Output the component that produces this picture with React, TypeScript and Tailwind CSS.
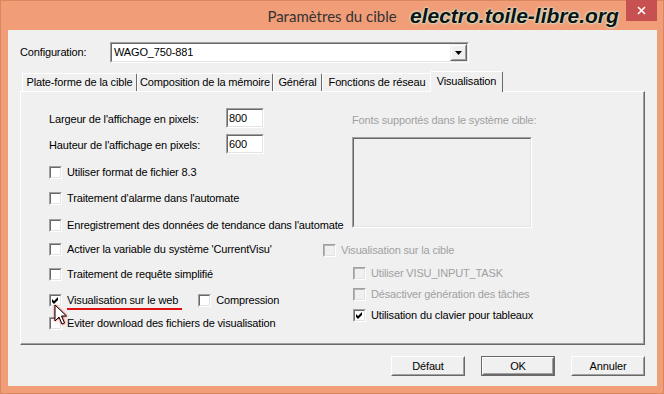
import React from "react";

function CheckMark() {
  return (
    <svg width="9" height="9" viewBox="0 0 9 9" className="block">
      <polygon points="1,3 3,5 7,1 7,4 3,8 1,6" fill="#000" />
    </svg>
  );
}

function Checkbox({ checked = false, disabled = false }: { checked?: boolean; disabled?: boolean }) {
  return (
    <div className="w-[13px] h-[13px] shrink-0 border border-t-[#a0a0a0] border-l-[#a0a0a0] border-b-white border-r-white">
      <div
        className={
          disabled
            ? "w-full h-full border border-t-[#b4b4b4] border-l-[#b4b4b4] border-b-[#e3e3e3] border-r-[#e3e3e3] bg-[#f0f0f0]"
            : "w-full h-full border border-t-[#696969] border-l-[#696969] border-b-[#e3e3e3] border-r-[#e3e3e3] bg-white"
        }
      >
        {checked ? <CheckMark /> : null}
      </div>
    </div>
  );
}

function CheckRow({
  label,
  checked = false,
  disabled = false,
  className = "",
  children,
}: {
  label: string;
  checked?: boolean;
  disabled?: boolean;
  className?: string;
  children?: React.ReactNode;
}) {
  return (
    <div className={`flex items-center h-[16px] whitespace-nowrap ${className}`}>
      <Checkbox checked={checked} disabled={disabled} />
      <span className={disabled ? "ml-[5px] text-[#a0a0a0]" : "ml-[5px] text-black"}>{label}</span>
      {children}
    </div>
  );
}

function Sunken({ className = "", innerClass = "", children }: { className?: string; innerClass?: string; children?: React.ReactNode }) {
  return (
    <div className={`border border-t-[#a0a0a0] border-l-[#a0a0a0] border-b-white border-r-white ${className}`}>
      <div className={`w-full h-full border border-t-[#696969] border-l-[#696969] border-b-[#e3e3e3] border-r-[#e3e3e3] ${innerClass}`}>
        {children}
      </div>
    </div>
  );
}

function Button({ label, isDefault = false }: { label: string; isDefault?: boolean }) {
  return (
    <div className={isDefault ? "w-[74px] h-[20px] border border-[#696969]" : "w-[74px] h-[20px]"}>
      <div className="w-full h-full border border-t-white border-l-white border-b-[#696969] border-r-[#696969]">
        <div className="w-full h-full border border-t-[#f0f0f0] border-l-[#f0f0f0] border-b-[#a0a0a0] border-r-[#a0a0a0] bg-[#f0f0f0] flex items-center justify-center">
          {label}
        </div>
      </div>
    </div>
  );
}

function Tab({ label, w }: { label: string; w: string }) {
  return (
    <div className={`${w} h-[18px] border-t border-l border-r border-t-white border-l-white border-r-[#696969] rounded-t-[2px] flex items-center justify-center whitespace-nowrap`}>
      {label}
    </div>
  );
}

export default function App() {
  return (
    <div className="w-[664px] h-[394px] bg-[#f09d78] shadow-[inset_0_0_0_1px_#d9875f] flex flex-col relative overflow-hidden font-['Liberation_Sans',Arial,sans-serif] text-[11px] tracking-[-0.15px] leading-[13px] text-black">
      {/* Title bar */}
      <div className="h-[30px] shrink-0 flex items-center justify-center pt-[2px]">
        <span className="font-['Lato',sans-serif] text-[15px] tracking-normal text-[#333333]">Paramètres du cible</span>
      </div>
      <div className="absolute left-[410px] top-[5px] font-['Liberation_Sans',Arial,sans-serif] font-bold italic text-[21px] leading-[21px] tracking-normal text-[#111] [text-shadow:0_0_3px_#c8ffe6,0_0_2px_#c8ffe6]">
        electro.toile-libre.org
      </div>
      <div className="absolute left-[626px] top-0 w-[31px] h-[21px] bg-[#c75050] flex items-center justify-center">
        <svg width="9" height="9" viewBox="0 0 9 9">
          <path d="M1 1 L8 8 M8 1 L1 8" stroke="#fff" strokeWidth="1.6" />
        </svg>
      </div>

      {/* Client area */}
      <div className="ml-[8px] mr-[7px] h-[356px] bg-[#f0f0f0] px-[12px] pt-[12px] flex flex-col">
        {/* Configuration row */}
        <div className="flex items-center h-[21px]">
          <span className="w-[90px]">Configuration:</span>
          <Sunken className="w-[359px] h-[21px]" innerClass="bg-white flex items-center">
            <span className="pl-[2px] flex-1">WAGO_750-881</span>
            <div className="w-[17px] h-[17px] border border-t-[#f0f0f0] border-l-[#f0f0f0] border-b-[#696969] border-r-[#696969]">
              <div className="w-full h-full border border-t-white border-l-white border-b-[#a0a0a0] border-r-[#a0a0a0] bg-[#f0f0f0] flex items-center justify-center">
                <svg width="7" height="4" viewBox="0 0 7 4">
                  <polygon points="0,0 7,0 3.5,4" fill="#000" />
                </svg>
              </div>
            </div>
          </Sunken>
        </div>

        {/* Tabs */}
        <div className="mt-[8px] h-[20px] flex items-end pl-[2px] relative z-10">
          <Tab label="Plate-forme de la cible" w="w-[115px]" />
          <Tab label="Composition de la mémoire" w="w-[136px]" />
          <Tab label="Général" w="w-[49px]" />
          <Tab label="Fonctions de réseau" w="w-[110px]" />
          <div className="-ml-[2px] w-[73px] h-[21px] -mb-[1px] bg-[#f0f0f0] border-t border-l border-r border-t-white border-l-white border-r-[#696969] rounded-t-[2px] flex items-center justify-center pb-[2px]">
            Visualisation
          </div>
        </div>

        {/* Panel */}
        <div className="w-[625px] h-[254px] border-t border-l border-r border-b border-t-white border-l-white border-r-[#696969] border-b-[#696969]">
          <div className="w-full h-full border-r border-b border-r-[#a0a0a0] border-b-[#a0a0a0] flex pl-[28px]">
            {/* Left column */}
            <div className="w-[274px] flex flex-col">
              <div className="mt-[16px] h-[20px] flex items-center whitespace-nowrap">
                <span className="w-[177px] pt-[2px]">Largeur de l'affichage en pixels:</span>
                <Sunken className="w-[38px] h-[20px]" innerClass="bg-white flex items-center">
                  <span className="pl-[1px]">800</span>
                </Sunken>
              </div>
              <div className="mt-[6px] h-[20px] flex items-center whitespace-nowrap">
                <span className="w-[177px] pt-[2px]">Hauteur de l'affichage en pixels:</span>
                <Sunken className="w-[38px] h-[20px]" innerClass="bg-white flex items-center">
                  <span className="pl-[1px]">600</span>
                </Sunken>
              </div>
              <CheckRow className="mt-[10px]" label="Utiliser format de fichier 8.3" />
              <CheckRow className="mt-[10px]" label="Traitement d'alarme dans l'automate" />
              <CheckRow className="mt-[11px]" label="Enregistrement des données de tendance dans l'automate" />
              <CheckRow className="mt-[8px]" label="Activer la variable du système 'CurrentVisu'" />
              <CheckRow className="mt-[9px]" label="Traitement de requête simplifié" />
              <div className="mt-[10px] flex items-center h-[16px] whitespace-nowrap">
                <Checkbox checked />
                <span className="ml-[5px] relative">
                  Visualisation sur le web
                  <span className="absolute left-0 -right-[4px] -bottom-[3px] h-[2px] bg-[#e01010]" />
                </span>
                <div className="ml-[20px] flex items-center">
                  <Checkbox />
                  <span className="ml-[5px]">Compression</span>
                </div>
              </div>
              <CheckRow className="mt-[7px]" label="Eviter download des fichiers de visualisation" />
            </div>

            {/* Right column */}
            <div className="flex flex-col">
              <div className="mt-[20px] ml-[29px] h-[16px] flex items-center whitespace-nowrap text-[#a0a0a0]">
                Fonts supportés dans le système cible:
              </div>
              <Sunken className="mt-[9px] ml-[29px] w-[180px] h-[91px]" innerClass="bg-[#f0f0f0]" />
              <CheckRow className="mt-[14px]" disabled label="Visualisation sur la cible" />
              <CheckRow className="mt-[7px] ml-[30px]" disabled label="Utiliser VISU_INPUT_TASK" />
              <CheckRow className="mt-[5px] ml-[30px]" disabled label="Désactiver génération des tâches" />
              <CheckRow className="mt-[5px] ml-[30px]" checked label="Utilisation du clavier pour tableaux" />
            </div>
          </div>
        </div>

        {/* Buttons */}
        <div className="mt-[11px] flex justify-end gap-[16px]">
          <Button label="Défaut" />
          <Button label="OK" isDefault />
          <Button label="Annuler" />
        </div>
      </div>

      {/* Mouse cursor */}
      <svg
        className="absolute left-[54px] top-[304px] [filter:drop-shadow(0_0_1px_#ff2020)]"
        width="14"
        height="22"
        viewBox="0 0 14 22"
      >
        <path d="M1 1 L1 17 L5 13 L8 20 L10.5 19 L7.5 12 L12.5 12 Z" fill="#fff" stroke="#000" strokeWidth="1" strokeLinejoin="miter" />
      </svg>
    </div>
  );
}
